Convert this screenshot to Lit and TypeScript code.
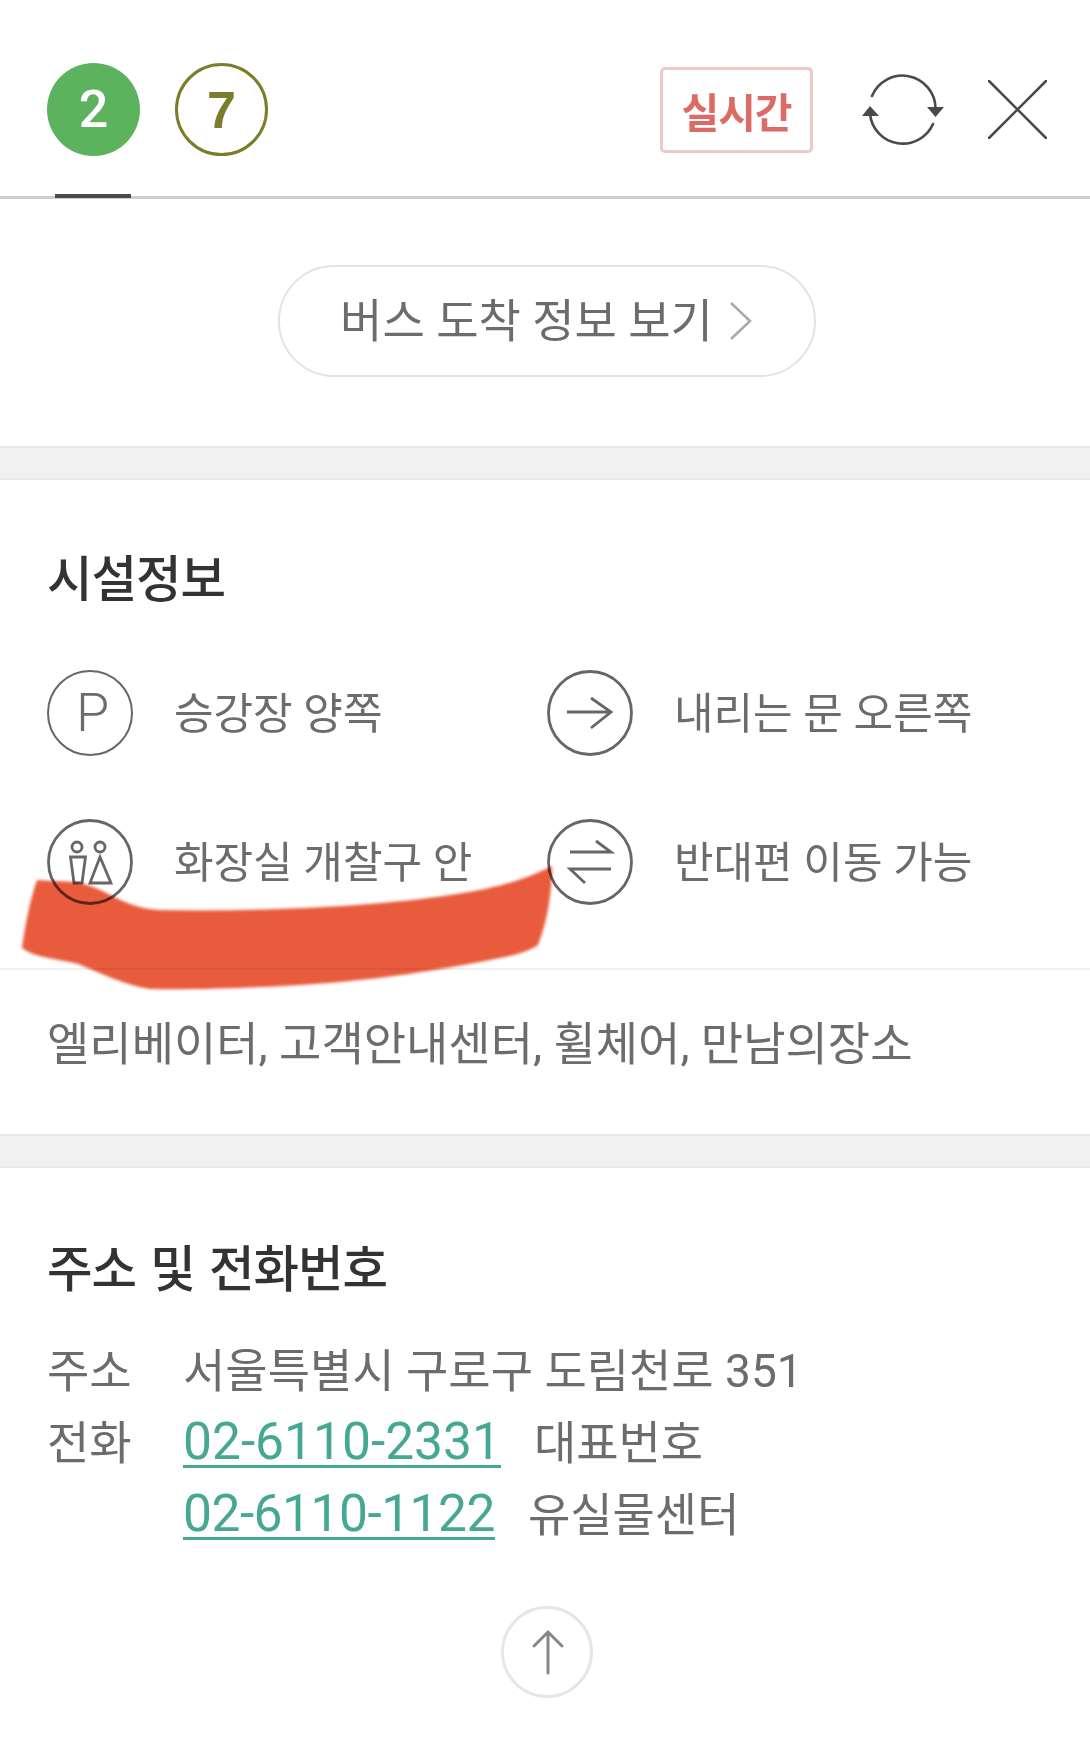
import { LitElement, css, html, svg } from 'lit';
import { customElement } from 'lit/decorators.js';

const stroke = (inner: unknown) => html`<svg class="ico" viewBox="0 0 86 86" fill="none" stroke="#666" stroke-width="2.8">
    <circle cx="43" cy="43" r="41.5"></circle>${inner}
</svg>`;

const facilities = [
    {
        label: '승강장 양쪽',
        icon: html`<span class="ico p-ico">P</span>`,
    },
    {
        label: '내리는 문 오른쪽',
        icon: stroke(svg`<path d="M20 42H64M44 28L64 42L44 58"></path>`),
    },
    {
        label: '화장실 개찰구 안',
        icon: stroke(svg`<circle cx="30" cy="28" r="5"></circle><circle cx="53" cy="28" r="5"></circle>
            <path d="M23.5 38H38.5L35 64H27ZM53 38L64 64H43Z"></path>`),
    },
    {
        label: '반대편 이동 가능',
        icon: stroke(svg`<path d="M23 33H64L49 22M64 50H23L38 64"></path>`),
    },
];

@customElement('app-root')
export class AppRoot extends LitElement {
    static styles = css`
        :host {
            display: block;
            position: relative;
            width: 1090px;
            height: 1759px;
            overflow: hidden;
            background: #fff;
            color: #6c6c6c;
            font-family: Roboto, 'Noto Sans CJK KR', sans-serif;
            font-weight: 400;
            font-size: 46px;
            line-height: 60px;
        }

        header {
            height: 199px;
            box-sizing: border-box;
            padding: 63px 43px 0 47px;
            border-bottom: 3px solid #cdcdcd;
            display: flex;
        }

        .bar {
            flex: 1;
            height: 93px;
            display: flex;
            align-items: center;
        }

        .line {
            width: 93px;
            height: 93px;
            box-sizing: border-box;
            border-radius: 50%;
            display: flex;
            align-items: center;
            justify-content: center;
            position: relative;
            font-family: Roboto, sans-serif;
            font-size: 52px;
            font-weight: 500;
        }

        .line.green {
            background: #5cb25d;
            color: #fff;
        }

        .line.green::after {
            content: '';
            position: absolute;
            left: 8px;
            top: 131px;
            width: 76px;
            height: 4px;
            background: #4a4a4a;
        }

        .line.olive {
            margin-left: 35px;
            border: 3px solid #7b7d2a;
            color: #7b7d2a;
            font-family: 'Liberation Sans', sans-serif;
            font-weight: 700;
        }

        .live {
            margin-left: auto;
            width: 153px;
            height: 86px;
            box-sizing: border-box;
            border: 3px solid #f0c9c7;
            border-radius: 5px;
            display: flex;
            align-items: center;
            justify-content: center;
            color: #dc6b66;
            font-family: 'Noto Sans CJK KR', sans-serif;
            font-size: 41px;
            font-weight: 700;
            letter-spacing: -1px;
        }

        .refresh {
            width: 84px;
            height: 72px;
            margin-left: 48px;
        }

        .close {
            width: 59px;
            height: 59px;
            margin-left: 43px;
        }

        .bus {
            height: 247px;
            box-sizing: border-box;
            padding: 0 0 3px 3px;
            display: flex;
            align-items: center;
            justify-content: center;
        }

        .bus-btn {
            width: 538px;
            height: 112px;
            box-sizing: border-box;
            border: 2.5px solid #e3e3e3;
            border-radius: 56px;
            display: flex;
            align-items: center;
            justify-content: center;
            gap: 16px;
            white-space: nowrap;
        }

        .bus-btn svg {
            width: 24px;
            height: 40px;
        }

        .band {
            height: 34px;
            box-sizing: border-box;
            background: #f1f1f1;
            border-top: 2px solid #e8e8e8;
            border-bottom: 2px solid #e8e8e8;
        }

        h2 {
            margin: 0;
            color: #333;
            font-family: 'Noto Sans CJK KR', sans-serif;
            font-size: 49.5px;
            font-weight: 500;
            letter-spacing: -1px;
            word-spacing: 4px;
        }

        .facility {
            padding: 66px 0 0;
            height: 654px;
            box-sizing: border-box;
        }

        .facility h2,
        .contact h2 {
            padding-left: 47px;
        }

        .grid {
            margin: 64px 0 0 47px;
            display: grid;
            grid-template-columns: 500px 1fr;
            grid-auto-rows: 86px;
            row-gap: 63px;
        }

        .item {
            display: flex;
            align-items: center;
            gap: 41px;
            white-space: nowrap;
            font-size: 43px;
        }

        .item span:last-child {
            padding-top: 1px;
        }

        .ico {
            width: 86px;
            height: 86px;
            flex: none;
        }

        .item .p-ico {
            box-sizing: border-box;
            border: 2.8px solid #666;
            border-radius: 50%;
            display: flex;
            align-items: center;
            justify-content: center;
            padding: 0 0 0 5px;
            font-family: Roboto, sans-serif;
            font-weight: 300;
            font-size: 54px;
        }

        .extra {
            margin-top: 63px;
            padding: 44px 0 0 47px;
            border-top: 2px solid #efefef;
            white-space: nowrap;
        }

        .contact {
            padding-top: 68px;
        }

        .rows {
            margin: 39px 0 0 47px;
            display: grid;
            grid-template-columns: 136px 1fr;
            grid-auto-rows: 72px;
            align-items: center;
        }

        .phone {
            display: flex;
            align-items: center;
        }

        .phone a {
            color: #46a892;
            font-size: 51.5px;
            line-height: 46px;
            border-bottom: 3px solid #46a892;
            margin-right: 33px;
            text-decoration: none;
        }

        .phone a.tight {
            letter-spacing: -0.5px;
        }

        .top {
            display: block;
            width: 92px;
            height: 92px;
            margin: 55px 0 0 501px;
            box-sizing: border-box;
            border: 3px solid #e6e6e6;
            border-radius: 50%;
        }

        .top svg {
            display: block;
            width: 100%;
            height: 100%;
        }

        .paint {
            position: absolute;
            left: 0;
            top: 0;
            width: 1090px;
            height: 1100px;
            mix-blend-mode: multiply;
            filter: blur(1.5px);
            pointer-events: none;
        }
    `;

    render() {
        return html`
            <header>
                <div class="bar">
                    <div class="line green">2</div>
                    <div class="line olive">7</div>
                    <div class="live">실시간</div>
                    <svg class="refresh" viewBox="0 0 84 72" fill="none" stroke="#4a4a4a" stroke-width="2.6" stroke-linecap="round">
                        <path d="M11 22A33 33 0 0 1 74.5 34"></path>
                        <path d="M72 50A33 33 0 0 1 9 40"></path>
                        <path d="M66 33H83L74.5 43ZM1 42H18L9 32Z" fill="#4a4a4a" stroke="none"></path>
                    </svg>
                    <svg class="close" viewBox="0 0 59 59" stroke="#4a4a4a" stroke-width="2.6" stroke-linecap="round">
                        <path d="M1 1L58 58M58 1L1 58"></path>
                    </svg>
                </div>
            </header>

            <section class="bus">
                <div class="bus-btn">
                    <span>버스 도착 정보 보기</span>
                    <svg viewBox="0 0 24 40" fill="none" stroke="#aaa" stroke-width="2.6"><path d="M2 2L21 20L2 38"></path></svg>
                </div>
            </section>

            <div class="band"></div>

            <section class="facility">
                <h2>시설정보</h2>
                <div class="grid">
                    ${facilities.map(f => html`<div class="item">${f.icon}<span>${f.label}</span></div>`)}
                </div>
                <div class="extra">엘리베이터, 고객안내센터, 휠체어, 만남의장소</div>
            </section>

            <div class="band"></div>

            <section class="contact">
                <h2>주소 및 전화번호</h2>
                <div class="rows">
                    <span>주소</span><span>서울특별시 구로구 도림천로 351</span>
                    <span>전화</span><span class="phone"><a>02-6110-2331</a>대표번호</span>
                    <span></span><span class="phone"><a class="tight">02-6110-1122</a>유실물센터</span>
                </div>
                <div class="top">
                    <svg viewBox="0 0 86 86" fill="none" stroke="#888" stroke-width="3" stroke-linecap="round">
                        <path d="M44 64V24M30 37L44 23L58 37"></path>
                    </svg>
                </div>
            </section>

            <svg class="paint" viewBox="0 0 1090 1100">
                <path fill="#e95b3d" d="M37 880C60 882 75 880 90 886C110 892 125 908 160 910C260 912 380 906 450 895C490 890 525 880 552 866C552 890 548 920 538 945C528 952 515 955 500 958C440 970 380 980 300 985C250 988 190 990 150 989C125 985 105 975 78 964C55 958 35 958 22 948C25 925 30 900 37 880Z"></path>
            </svg>
        `;
    }
}
